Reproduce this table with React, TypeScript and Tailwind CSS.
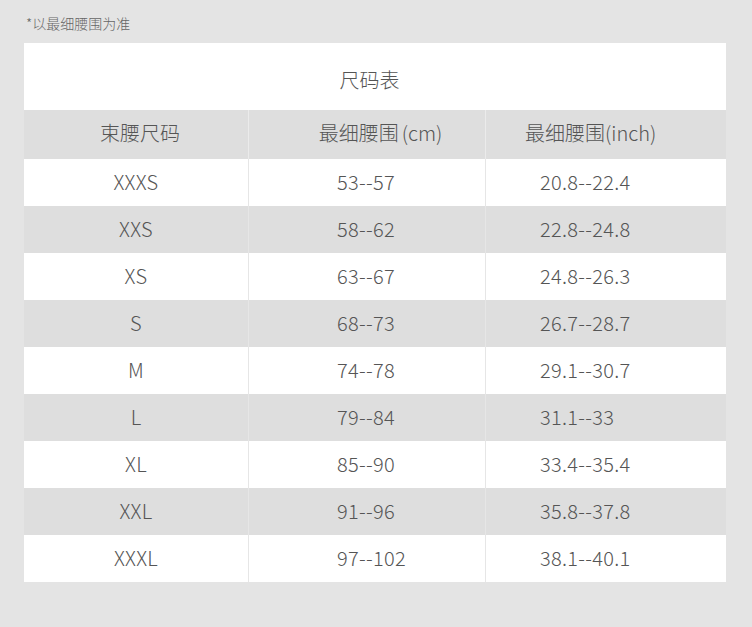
import React from "react";

const rows = [
  ["XXXS", "53--57", "20.8--22.4"],
  ["XXS", "58--62", "22.8--24.8"],
  ["XS", "63--67", "24.8--26.3"],
  ["S", "68--73", "26.7--28.7"],
  ["M", "74--78", "29.1--30.7"],
  ["L", "79--84", "31.1--33"],
  ["XL", "85--90", "33.4--35.4"],
  ["XXL", "91--96", "35.8--37.8"],
  ["XXXL", "97--102", "38.1--40.1"],
];

export default function App() {
  return (
    <div
      className="w-[752px] h-[627px] bg-[#e4e4e4] text-[#555] overflow-hidden font-light"
      style={{ fontFamily: '"Noto Sans CJK SC", "Noto Sans", sans-serif' }}
    >
      <div className="h-[43px] pl-[26px] pt-[13px] text-[14px] leading-[20px] text-[#666]">*以最细腰围为准</div>
      <div className="mx-[24px] w-[702px] bg-white">
        <div className="h-[67px] flex items-center justify-center text-[20px] pt-[6px] pr-[11px]">尺码表</div>
        <div className="grid grid-cols-[224px_1px_236px_1px_240px] h-[49px] bg-[#dedede] text-[20px]">
          <div className="flex items-center justify-center pl-[8px] pb-[4px]">束腰尺码</div>
          <div className="bg-[#ebebeb]" />
          <div className="flex items-center justify-center pl-[27px] pb-[4px]">
            最细腰围<span className="ml-[3px]">(cm)</span>
          </div>
          <div className="bg-[#ebebeb]" />
          <div className="flex items-center pl-[39px] pb-[4px]">最细腰围(inch)</div>
        </div>
        {rows.map((r, i) => (
          <div
            key={i}
            className={`grid grid-cols-[224px_1px_236px_1px_240px] h-[47px] text-[20px] tracking-[0.3px] ${i % 2 === 1 ? "bg-[#dedede]" : "bg-white"}`}
          >
            <div className="flex items-center justify-center pb-[1px]">{r[0]}</div>
            <div className="bg-[#e6e6e6]" />
            <div className="flex items-center pl-[88px] pb-[1px]">{r[1]}</div>
            <div className="bg-[#e6e6e6]" />
            <div className="flex items-center pl-[54px] pb-[1px]">{r[2]}</div>
          </div>
        ))}
      </div>
    </div>
  );
}
